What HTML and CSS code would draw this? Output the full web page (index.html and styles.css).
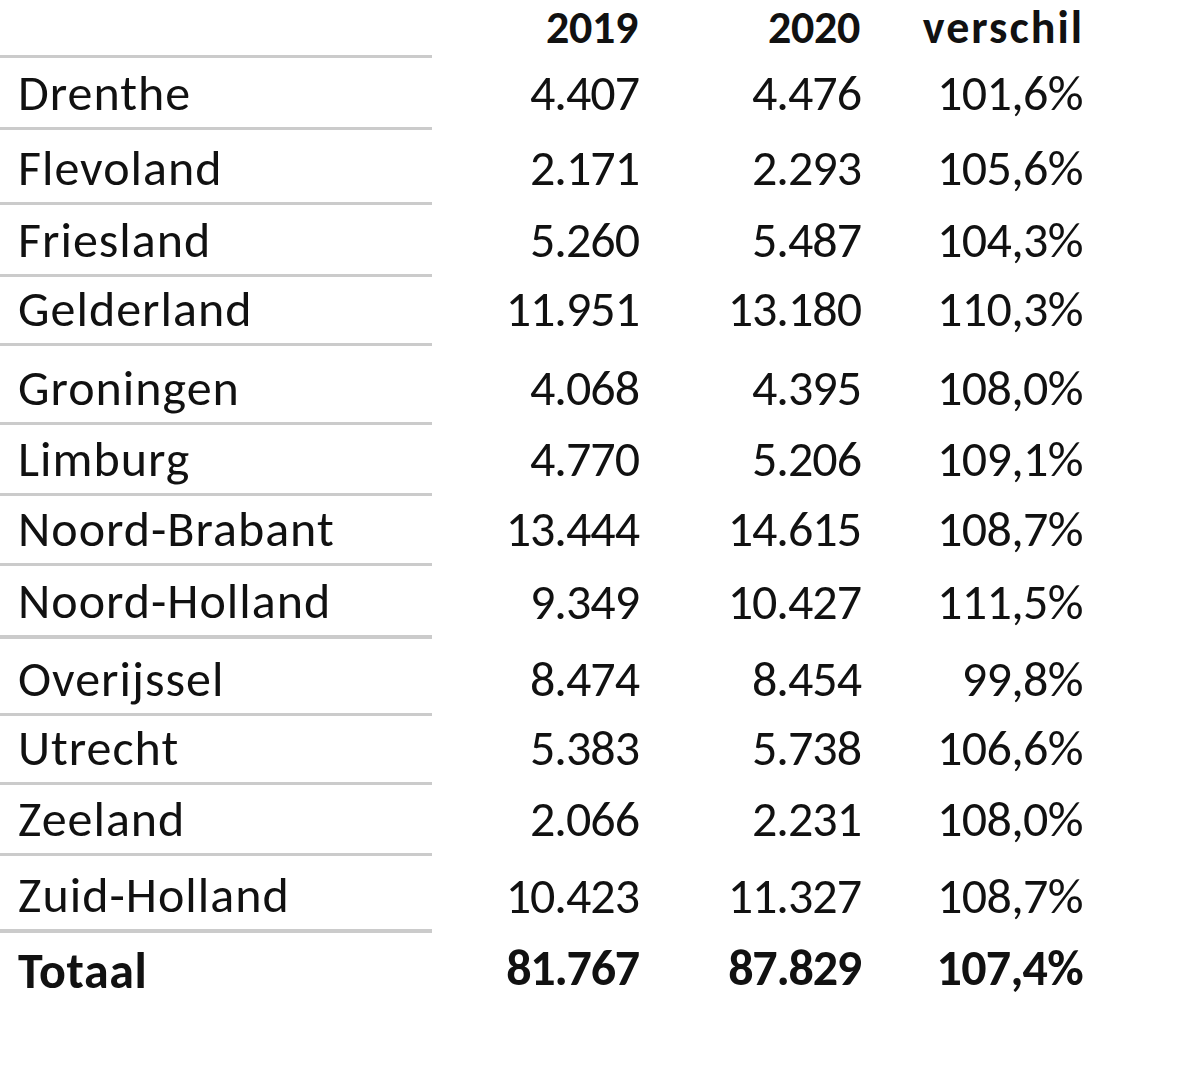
FILE: index.html
```html
<!DOCTYPE html>
<html lang="nl">
<head>
<meta charset="utf-8">
<title>Provincies 2019-2020</title>
<link rel="stylesheet" href="styles.css">
</head>
<body>
<div class="sheet">
  <div class="row head r0">
    <div class="name"></div>
    <div class="num">2019</div>
    <div class="num">2020</div>
    <div class="num pct">verschil</div>
  </div>
  <div class="row r1"><div class="name">Drenthe</div><div class="num">4.407</div><div class="num">4.476</div><div class="num pct">101,6%</div></div>
  <div class="row r2"><div class="name">Flevoland</div><div class="num">2.171</div><div class="num">2.293</div><div class="num pct">105,6%</div></div>
  <div class="row r3"><div class="name">Friesland</div><div class="num">5.260</div><div class="num">5.487</div><div class="num pct">104,3%</div></div>
  <div class="row r4"><div class="name">Gelderland</div><div class="num">11.951</div><div class="num">13.180</div><div class="num pct">110,3%</div></div>
  <div class="row r5"><div class="name">Groningen</div><div class="num">4.068</div><div class="num">4.395</div><div class="num pct">108,0%</div></div>
  <div class="row r6"><div class="name">Limburg</div><div class="num">4.770</div><div class="num">5.206</div><div class="num pct">109,1%</div></div>
  <div class="row r7"><div class="name">Noord-Brabant</div><div class="num">13.444</div><div class="num">14.615</div><div class="num pct">108,7%</div></div>
  <div class="row r8 thick"><div class="name">Noord-Holland</div><div class="num">9.349</div><div class="num">10.427</div><div class="num pct">111,5%</div></div>
  <div class="row r9"><div class="name">Overijssel</div><div class="num">8.474</div><div class="num">8.454</div><div class="num pct">99,8%</div></div>
  <div class="row r10"><div class="name">Utrecht</div><div class="num">5.383</div><div class="num">5.738</div><div class="num pct">106,6%</div></div>
  <div class="row r11"><div class="name">Zeeland</div><div class="num">2.066</div><div class="num">2.231</div><div class="num pct">108,0%</div></div>
  <div class="row r12 thick"><div class="name">Zuid-Holland</div><div class="num">10.423</div><div class="num">11.327</div><div class="num pct">108,7%</div></div>
  <div class="row total"><div class="name">Totaal</div><div class="num">81.767</div><div class="num">87.829</div><div class="num pct">107,4%</div></div>
</div>
</body>
</html>
```
FILE: styles.css
```css
html, body {
  margin: 0;
  padding: 0;
  background: #ffffff;
}
body {
  font-family: Carlito, Calibri, Lato, "Liberation Sans", sans-serif;
  font-size: 50px;
  color: #111111;
}
.sheet {
  display: flex;
  flex-direction: column;
  width: 1200px;
}
.row {
  display: grid;
  grid-template-columns: 432px 206px 222px 222px;
  box-sizing: border-box;
  height: 72px;
}
.row > div {
  box-sizing: border-box;
  height: 100%;
  display: flex;
  align-items: flex-end;
  line-height: 0.8;
  white-space: nowrap;
}
.row > .name {
  padding-left: 18px;
  padding-bottom: 14px;
  letter-spacing: 1px;
  border-bottom: 3px solid #cbcbcb;
}
.row > .num {
  justify-content: flex-end;
  padding-bottom: 17px;
  letter-spacing: -1px;
  margin-right: -1px;
}
.row > .pct {
  letter-spacing: -0.6px;
}
.row.thick > .name {
  border-bottom-width: 4px;
}
.head > div, .total > div {
  font-weight: 700;
}
.head > .num {
  font-size: 46px;
  padding-bottom: 12px;
  letter-spacing: -0.3px;
  margin-right: 0;
}
.head > .pct {
  letter-spacing: 2px;
  margin-right: -2px;
}
.total > .name {
  border-bottom: none;
  letter-spacing: 0.6px;
}
.total > .num {
  letter-spacing: -1.2px;
}
.total > .pct {
  letter-spacing: -0.7px;
}
.r0 { height: 58px; }
.r1 { height: 72px; }
.r2 { height: 75px; }
.r3 { height: 72px; }
.r4 { height: 69px; }
.r5 { height: 79px; }
.r6 { height: 71px; }
.r7 { height: 70px; }
.r8 { height: 73px; }
.r9 { height: 77px; }
.r10 { height: 69px; }
.r11 { height: 71px; }
.r12 { height: 77px; }
.total { height: 72px; }
```
